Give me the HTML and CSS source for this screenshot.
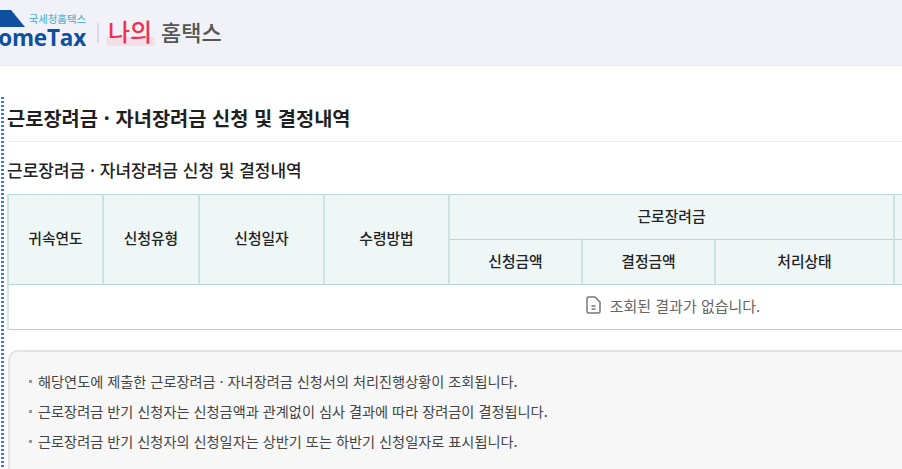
FILE: index.html
```html
<!DOCTYPE html>
<html lang="ko">
<head>
<meta charset="utf-8">
<title>근로장려금 · 자녀장려금 신청 및 결정내역</title>
<link rel="stylesheet" href="styles.css">
</head>
<body>
<header class="top">
  <div class="logo">
    <svg class="roof" width="60" height="18" viewBox="0 0 60 18" aria-hidden="true">
      <path d="M0 0 H41 L55 17 H0 Z" fill="#0f4fa0"/>
    </svg>
    <div class="logo-text">
      <span class="logo-kr">국세청홈택스</span>
      <span class="logo-en">HomeTax</span>
    </div>
  </div>
  <i class="sep"></i>
  <span class="mine">나의</span>
  <span class="mine-rest">홈택스</span>
</header>
<main class="content">
  <h1 class="page-title">근로장려금 · 자녀장려금 신청 및 결정내역</h1>
  <h2 class="sub-title">근로장려금 · 자녀장려금 신청 및 결정내역</h2>
  <table class="grid">
    <colgroup>
      <col class="c1"><col class="c2"><col class="c3"><col class="c4"><col class="c5"><col class="c6"><col class="c7"><col class="c8">
    </colgroup>
    <thead>
      <tr>
        <th rowspan="2">귀속연도</th>
        <th rowspan="2">신청유형</th>
        <th rowspan="2">신청일자</th>
        <th rowspan="2">수령방법</th>
        <th colspan="3">근로장려금</th>
        <th></th>
      </tr>
      <tr>
        <th>신청금액</th>
        <th>결정금액</th>
        <th>처리상태</th>
        <th></th>
      </tr>
    </thead>
    <tbody>
      <tr>
        <td colspan="8" class="empty">
          <span class="empty-in">
            <svg width="16" height="18" viewBox="0 0 16 18" fill="none" stroke="#777" stroke-width="1.5" aria-hidden="true">
              <path d="M2 2.5 Q2 1 3.5 1 H10 L15 6 V15.5 Q15 17 13.5 17 H3.5 Q2 17 2 15.5 Z"/>
              <path d="M6.5 10 H10.5 M6.5 13 H10.5"/>
            </svg>
            조회된 결과가 없습니다.
          </span>
        </td>
      </tr>
    </tbody>
  </table>
  <ul class="notes">
    <li>해당연도에 제출한 근로장려금 · 자녀장려금 신청서의 처리진행상황이 조회됩니다.</li>
    <li>근로장려금 반기 신청자는 신청금액과 관계없이 심사 결과에 따라 장려금이 결정됩니다.</li>
    <li>근로장려금 반기 신청자의 신청일자는 상반기 또는 하반기 신청일자로 표시됩니다.</li>
  </ul>
</main>
</body>
</html>
```
FILE: styles.css
```css
* { box-sizing: border-box; }
html, body { margin: 0; overflow: hidden; background: #fff; }
body { font-family: "Noto Sans CJK KR", "Noto Sans", sans-serif; color: #222; width: 902px; height: 469px; }

.top {
  height: 66px;
  background: #f1f2f7;
  border-bottom: 1px solid #e6e8ee;
  display: flex;
  align-items: center;
  white-space: nowrap;
}
.logo { position: relative; width: 86px; height: 40px; flex: none; margin-top: -2px; }
.roof { position: absolute; left: -30px; top: -2px; }
.logo-text { display: flex; flex-direction: column; align-items: flex-end; }
.logo-kr { font-size: 10.4px; line-height: 12px; font-weight: 500; color: #5fb6d2; margin-top: 1px; }
.logo-en { font-family: "Open Sans", sans-serif; font-weight: 700; font-size: 22.5px; line-height: 25px; color: #0f4fa0; letter-spacing: -0.2px; }
.sep { width: 2px; height: 20px; background: #dcdde2; margin: 0 9px 0 11px; flex: none; }
.mine {
  font-size: 24px; font-weight: 500; color: #f0304f; line-height: 32px;
  padding: 0 2px;
  margin-left: -2px;
  background: linear-gradient(transparent 22px, #f3dfe7 22px, #f3dfe7 31px, transparent 31px);
  border-radius: 5px;
  width: 49px;
  margin-top: -3px;
}
.mine-rest { font-size: 22px; font-weight: 500; color: #555; margin-left: 6px; margin-top: -4px; }

.content {
  margin: 31px 0 0 1px; padding: 0 0 0 7px; width: 1400px; height: 400px;
  background: linear-gradient(#3474f4 50%, transparent 50%) left top / 3px 4px repeat-y;
}
.page-title { margin: 0 0 0 -1px; padding: 6px 0 8px; height: 45px; font-size: 19.8px; line-height: 30px; font-weight: 700; color: #1f1f1f; border-bottom: 1px solid #e8eaf0; }
.sub-title { margin: 14px 0 0 -1px; font-size: 17px; line-height: 28px; font-weight: 500; color: #222; height: 39px; }

.grid { border-collapse: collapse; table-layout: fixed; width: 1328px; margin: -1px 0 0 -1px; }
.c1 { width: 95px; } .c2 { width: 96px; } .c3 { width: 125px; } .c4 { width: 125px; }
.c5 { width: 133px; } .c6 { width: 133px; } .c7 { width: 179px; } .c8 { width: 442px; }
.grid th {
  background: #eef7f6; border: 1px solid #b4d8d8; border-left-color: #c9e3e3; border-right-color: #c9e3e3; border-left-width: 2px;
  height: 45px; padding: 0 0 4px; font-size: 14.8px; font-weight: 500; color: #222; text-align: center;
}
.grid td { padding: 0; }
.empty { height: 45px; text-align: center; border-left: 2px solid #d3e7e7; border-bottom: 1px solid #b9d3d6; color: #666; font-size: 15px; }
.grid .empty { padding-bottom: 1px; }
.empty-in { display: inline-flex; align-items: center; gap: 9px; }

.notes {
  list-style: none; margin: 20px 0 0 0; padding: 14px 19px; width: 1000px; height: 140px;
  background: #f7f7f7; border: 2px solid #e2e2e2; border-radius: 10px;
}
.notes li { font-size: 14.2px; line-height: 30px; color: #444; padding-left: 9px; position: relative; }
.notes li::before { content: ""; position: absolute; left: 0; top: 14px; width: 3px; height: 3px; background: #999; }
```
